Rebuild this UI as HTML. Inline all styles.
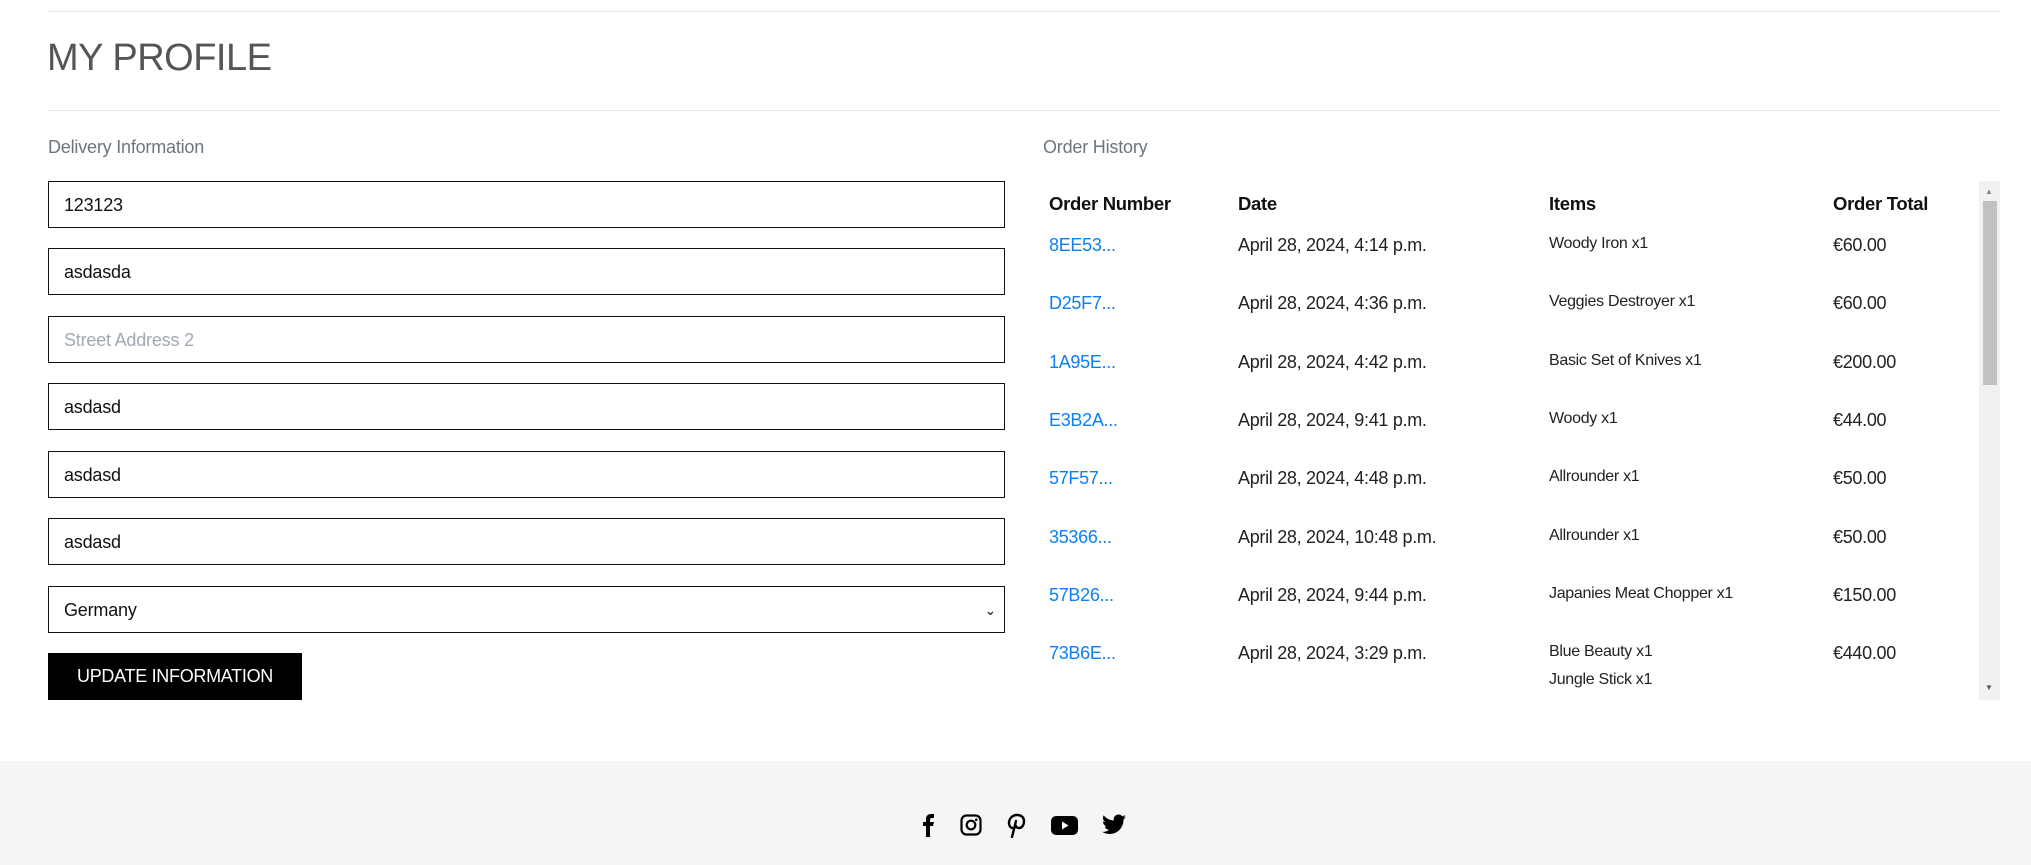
<!DOCTYPE html>
<html><head><meta charset="utf-8"><style>
*{box-sizing:border-box;margin:0;padding:0}
body{width:2031px;height:865px;overflow:hidden;background:#fff;font-family:"Liberation Sans",sans-serif;color:#222;position:relative}
.abs{position:absolute}
.hr{position:absolute;left:48px;width:1952px;height:1px;background:#e6e6e6}
h1{position:absolute;left:47px;top:37px;font-size:38px;font-weight:400;color:#555;letter-spacing:-0.5px}
.lbl{position:absolute;font-size:18px;color:#6c757d;letter-spacing:-0.2px}
.inp{position:absolute;left:48px;width:957px;height:47px;border:1.5px solid #111;font-size:18px;padding-left:15px;line-height:46px;color:#111;letter-spacing:-0.2px}
.btn{position:absolute;left:48px;top:653px;width:254px;height:47px;background:#000;color:#fff;font-size:18px;line-height:47px;text-align:center;letter-spacing:-0.3px}
.th{position:absolute;font-size:18.5px;font-weight:700;color:#111;letter-spacing:-0.3px}
.c{position:absolute;font-size:18px;color:#222;letter-spacing:-0.3px}
.a{color:#0d7ff5}
.it{font-size:16px;line-height:28px}
.foot{position:absolute;left:0;top:761px;width:2031px;height:104px;background:#f5f5f5}
</style></head><body>
<div class="hr" style="top:11px"></div>
<h1>MY PROFILE</h1>
<div class="hr" style="top:110px"></div>
<div class="lbl" style="left:48px;top:137px">Delivery Information</div>
<div class="lbl" style="left:1043px;top:137px">Order History</div>
<div class="inp" style="top:181px">123123</div>
<div class="inp" style="top:248px">asdasda</div>
<div class="inp" style="top:316px;color:#a0aab5">Street Address 2</div>
<div class="inp" style="top:383px">asdasd</div>
<div class="inp" style="top:451px">asdasd</div>
<div class="inp" style="top:518px">asdasd</div>
<div class="inp" style="top:586px">Germany<span style="position:absolute;right:8px;top:0;font-size:14px">&#8964;</span></div>
<div class="btn">UPDATE INFORMATION</div>

<div class="abs" style="left:1043px;top:181px;width:936px;height:519px;overflow:hidden">
<div class="th" style="left:6px;top:12px">Order Number</div>
<div class="th" style="left:195px;top:12px">Date</div>
<div class="th" style="left:506px;top:12px">Items</div>
<div class="th" style="left:790px;top:12px">Order Total</div>
<div id="rows"></div>
</div>
<div class="abs" style="left:1979px;top:181px;width:21px;height:519px;background:#f1f1f1">
<div class="abs" style="left:4px;top:20px;width:14px;height:184px;background:#c1c1c1"></div>
<div class="abs" style="left:6px;top:6px;font-size:8px;color:#888">▲</div>
<div class="abs" style="left:6px;top:502px;font-size:8px;color:#555">▼</div>
</div>

<div class="foot">
<svg class="abs" style="left:918px;top:52px" width="22" height="24" viewBox="0 0 22 24"><path d="M8 24V13H5V9h3V6c0-3 2-5 5-5h3v4h-2c-1 0-2 .5-2 2v2h4l-1 4h-3v11z" fill="#000"/></svg>
<svg class="abs" style="left:960px;top:53px" width="22" height="22" viewBox="0 0 22 22"><rect x="1.5" y="1.5" width="19" height="19" rx="5" fill="none" stroke="#000" stroke-width="2.2"/><circle cx="11" cy="11" r="4.3" fill="none" stroke="#000" stroke-width="2.2"/><circle cx="16.3" cy="5.7" r="1.3"/></svg>
<svg class="abs" style="left:1006px;top:52px" width="20" height="25" viewBox="0 0 20 25"><path d="M6 15c-2-1-3-3-3-5 0-4 3-8 8-8s7 3 7 6c0 4-2 7-5 7-2 0-3-1-3-2M10 8l-4 16" fill="none" stroke="#000" stroke-width="2.4" stroke-linecap="round"/></svg>
<svg class="abs" style="left:1051px;top:55px" width="27" height="19" viewBox="0 0 27 19"><rect x="0" y="0" width="27" height="19" rx="5"/><path d="M11 5.5v8l6.5-4z" fill="#fff"/></svg>
<svg class="abs" style="left:1102px;top:53px" width="24" height="21" viewBox="0 0 24 20"><path d="M24 2.4c-.9.4-1.8.7-2.8.8 1-.6 1.8-1.6 2.2-2.7-1 .6-2 1-3.1 1.2C19.3.7 18 0 16.6 0c-2.7 0-4.9 2.2-4.9 4.9 0 .4 0 .8.1 1.1C7.7 5.8 4.1 3.9 1.7.9c-.4.7-.7 1.6-.7 2.5 0 1.7.9 3.2 2.2 4.1-.8 0-1.600-.2-2.2-.6v.1c0 2.4 1.7 4.4 3.9 4.8-.4.1-.8.2-1.3.2-.3 0-.6 0-.9-.1.6 2 2.4 3.4 4.6 3.4-1.7 1.3-3.8 2.100-6.1 2.1-.4 0-.8 0-1.2-.1 2.2 1.4 4.8 2.2 7.5 2.2 9.1 0 14-7.5 14-14v-.6c1-.7 1.8-1.6 2.5-2.5z"/></svg>
</div>
<script>
var d=[["8EE53...","April 28, 2024, 4:14 p.m.",["Woody Iron x1"],"€60.00"],["D25F7...","April 28, 2024, 4:36 p.m.",["Veggies Destroyer x1"],"€60.00"],["1A95E...","April 28, 2024, 4:42 p.m.",["Basic Set of Knives x1"],"€200.00"],["E3B2A...","April 28, 2024, 9:41 p.m.",["Woody x1"],"€44.00"],["57F57...","April 28, 2024, 4:48 p.m.",["Allrounder x1"],"€50.00"],["35366...","April 28, 2024, 10:48 p.m.",["Allrounder x1"],"€50.00"],["57B26...","April 28, 2024, 9:44 p.m.",["Japanies Meat Chopper x1"],"€150.00"],["73B6E...","April 28, 2024, 3:29 p.m.",["Blue Beauty x1","Jungle Stick x1","Bread Baker x1"],"€440.00"]];
var h="";d.forEach(function(r,i){var t=54+i*58.3;
h+='<div class="c a" style="left:6px;top:'+t+'px">'+r[0]+'</div><div class="c" style="left:195px;top:'+t+'px">'+r[1]+'</div><div class="c it" style="left:506px;top:'+(t-5)+'px">'+r[2].join("<br>")+'</div><div class="c" style="left:790px;top:'+t+'px">'+r[3]+'</div>';});
document.getElementById("rows").innerHTML=h;
</script>
</body></html>
